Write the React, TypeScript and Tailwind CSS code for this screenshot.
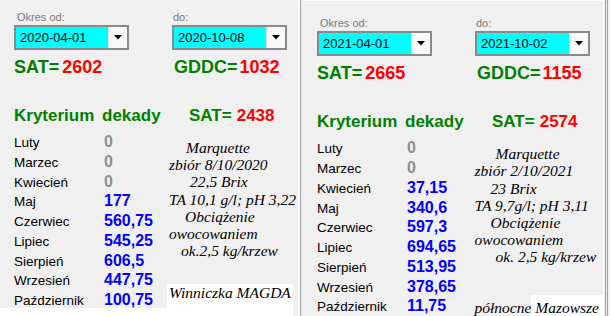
import React from 'react';

type Row = { label: string; value: string; zero?: boolean };
type Note = { text: string; indent: string };

const Combo: React.FC<{ value: string }> = ({ value }) => (
  <div className="flex h-[25px] w-[115px] border-2 border-[#8a8a8a] bg-white">
    <div className="flex flex-1 items-center bg-[#00ffff] pl-[4px] text-[13px] text-black">{value}</div>
    <div className="flex w-[19px] items-center justify-center border-l border-[#e2e2e2] bg-[#f8f8f8]">
      <svg width="8" height="5" viewBox="0 0 8 5">
        <path d="M0 0h8L4 4.5z" fill="#000" />
      </svg>
    </div>
  </div>
);

type PanelProps = {
  from: string;
  to: string;
  sat: string;
  gddc: string;
  ksat: string;
  rows: Row[];
  notes: Note[];
  listWidth: string;
  footerGap: string;
  footer: React.ReactNode;
};

const Panel: React.FC<PanelProps> = ({ from, to, sat, gddc, ksat, rows, notes, listWidth, footerGap, footer }) => (
  <div className="flex flex-col">
    {/* date pickers */}
    <div className="flex">
      <div className="w-[158px]">
        <div className="h-[13px] pl-[3px] text-[11px] leading-[13px] text-[#7a7a7a]">Okres od:</div>
        <div className="mt-px">
          <Combo value={from} />
        </div>
      </div>
      <div>
        <div className="h-[13px] pl-[1px] text-[11px] leading-[13px] text-[#7a7a7a]">do:</div>
        <div className="mt-px">
          <Combo value={to} />
        </div>
      </div>
    </div>

    {/* totals */}
    <div className="mt-[7px] flex h-[20px] text-[18px] font-bold leading-[20px] text-[#008000]">
      <div className="w-[160px]">
        SAT=<span className="ml-[3px] text-[#ff0000]">{sat}</span>
      </div>
      <div>
        GDDC=<span className="ml-[2px] text-[#ff0000]">{gddc}</span>
      </div>
    </div>

    <div className="mt-[29px] flex h-[20px] text-[17px] font-bold leading-[20px] text-[#008000]">
      <span className="w-[88px]">Kryterium</span>
      <span className="w-[87px]">dekady</span>
      <span>SAT=</span>
      <span className="ml-[5px] text-[#ff0000]">{ksat}</span>
    </div>

    {/* months + notes */}
    <div className="mt-[6px] flex">
      <div className={listWidth}>
        {rows.map((r) => (
          <div key={r.label} className="flex h-[19.75px] items-baseline leading-[19.75px]">
            <span className="w-[90px] text-[13.5px] text-black">{r.label}</span>
            <span className={r.zero ? 'text-[16px] font-bold text-[#8f8f8f]' : 'text-[16px] font-bold text-[#0000ff]'}>
              {r.value}
            </span>
          </div>
        ))}
      </div>
      <div className="whitespace-nowrap pt-[7px] font-['Liberation_Serif',serif] text-[15.5px] italic leading-[17.2px] text-black">
        {notes.map((n) => (
          <div key={n.text} className={n.indent}>
            {n.text}
          </div>
        ))}
        <div className={footerGap}>{footer}</div>
      </div>
    </div>
  </div>
);

const leftRows: Row[] = [
  { label: 'Luty', value: '0', zero: true },
  { label: 'Marzec', value: '0', zero: true },
  { label: 'Kwiecień', value: '0', zero: true },
  { label: 'Maj', value: '177' },
  { label: 'Czerwiec', value: '560,75' },
  { label: 'Lipiec', value: '545,25' },
  { label: 'Sierpień', value: '606,5' },
  { label: 'Wrzesień', value: '447,75' },
  { label: 'Październik', value: '100,75' },
];

const rightRows: Row[] = [
  { label: 'Luty', value: '0', zero: true },
  { label: 'Marzec', value: '0', zero: true },
  { label: 'Kwiecień', value: '37,15' },
  { label: 'Maj', value: '340,6' },
  { label: 'Czerwiec', value: '597,3' },
  { label: 'Lipiec', value: '694,65' },
  { label: 'Sierpień', value: '513,95' },
  { label: 'Wrzesień', value: '378,65' },
  { label: 'Październik', value: '11,75' },
];

const leftNotes: Note[] = [
  { text: 'Marquette', indent: 'pl-[17px]' },
  { text: 'zbiór 8/10/2020', indent: 'pl-0' },
  { text: '22,5 Brix', indent: 'pl-[21px]' },
  { text: 'TA 10,1 g/l; pH 3,22', indent: 'pl-0' },
  { text: 'Obciążenie', indent: 'pl-[16px]' },
  { text: 'owocowaniem', indent: 'pl-0' },
  { text: 'ok.2,5 kg/krzew', indent: 'pl-[12px]' },
];

const rightNotes: Note[] = [
  { text: 'Marquette', indent: 'pl-[21px]' },
  { text: 'zbiór 2/10/2021', indent: 'pl-0' },
  { text: '23 Brix', indent: 'pl-[16px]' },
  { text: 'TA 9,7g/l; pH 3,11', indent: 'pl-0' },
  { text: 'Obciążenie', indent: 'pl-[16px]' },
  { text: 'owocowaniem', indent: 'pl-0' },
  { text: 'ok. 2,5 kg/krzew', indent: 'pl-[21px]' },
];

export default function App() {
  return (
    <div className="flex h-[316px] w-[610px] overflow-hidden bg-white font-['Liberation_Sans',Arial,sans-serif]">
      {/* 2020 season */}
      <div className="flex w-[298px] flex-col bg-[#f0f0f0]">
        <div className="h-[308px] pl-[14px] pt-[11px]">
          <Panel
            from="2020-04-01"
            to="2020-10-08"
            sat="2602"
            gddc="1032"
            ksat="2438"
            rows={leftRows}
            notes={leftNotes}
            listWidth="w-[155px]"
            footerGap="mt-[25px]"
            footer={<div className="-ml-[2px] h-[34px] w-[126px] bg-white pl-[2px]">Winniczka MAGDA</div>}
          />
        </div>
        <div className="h-[8px] w-[293px] bg-white" />
      </div>
      <div className="w-[2px] bg-white" />
      <div className="w-px bg-[#a0a0a0]" />

      {/* 2021 season */}
      <div className="flex w-[302px] flex-col overflow-hidden bg-[#f0f0f0]">
        <div className="ml-[2px] h-[3px] bg-white" />
        <div className="pl-[16px] pt-[16px]">
          <Panel
            from="2021-04-01"
            to="2021-10-02"
            sat="2665"
            gddc="1155"
            ksat="2574"
            rows={rightRows}
            notes={rightNotes}
            listWidth="w-[161px]"
            footerGap="mt-[33px]"
            footer={
              <div>
                północne<span className="bg-white pb-[6px] pr-[4px] pt-[4px]"> Mazowsze</span>
              </div>
            }
          />
        </div>
      </div>
      <div className="w-px bg-white" />
      <div className="w-px bg-[#f0f0f0]" />
      <div className="w-px bg-[#a0a0a0]" />
      <div className="w-px bg-[#f0f0f0]" />
      <div className="w-px bg-[#a0a0a0]" />
      <div className="flex-1 bg-[#f0f0f0]" />
    </div>
  );
}
